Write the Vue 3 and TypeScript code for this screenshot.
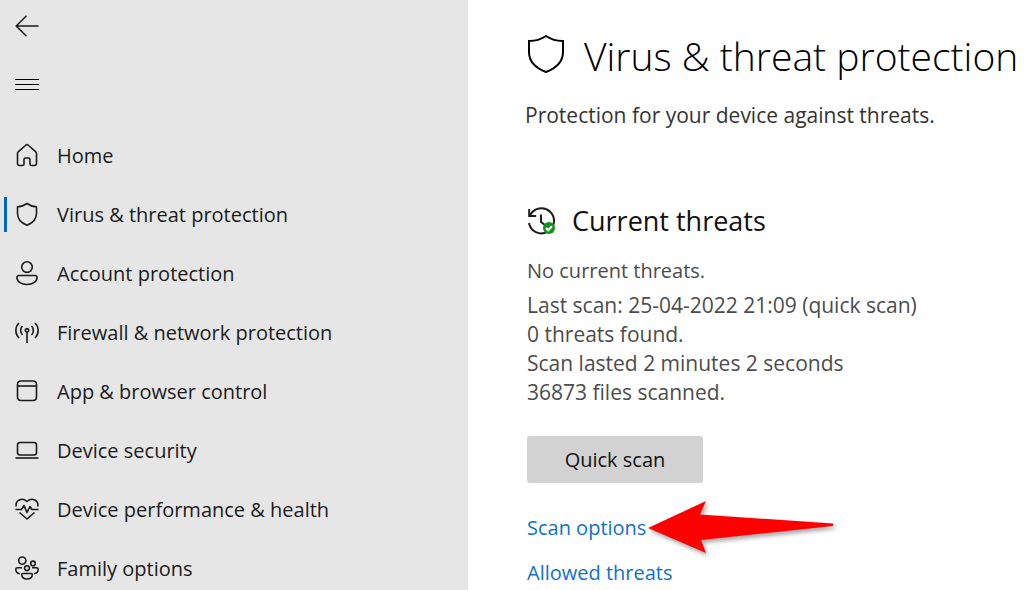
<script setup lang="ts">
interface NavItem {
  label: string
  icon: string[]
  active?: boolean
}

const navItems: NavItem[] = [
  {
    label: 'Home',
    icon: ['M2.5 10.5 Q2.5 9.4 3.4 8.6 L11 2 Q12 1.3 13 2 L20.6 8.6 Q21.5 9.4 21.5 10.5 V20.5 Q21.5 22.5 19.5 22.5 H16.5 Q15 22.5 15 21 V16.5 Q15 15 13.5 15 H10.5 Q9 15 9 16.5 V21 Q9 22.5 7.5 22.5 H4.5 Q2.5 22.5 2.5 20.5 Z'],
  },
  {
    label: 'Virus & threat protection',
    icon: ['M12 1.5 Q16.2 4.6 21.5 4.9 V11.5 Q21.5 19.5 12 23.2 Q2.5 19.5 2.5 11.5 V4.9 Q7.8 4.6 12 1.5 Z'],
    active: true,
  },
  {
    label: 'Account protection',
    icon: [
      'M12 .8 A5.3 5.3 0 1 1 12 11.4 A5.3 5.3 0 1 1 12 .8 Z',
      'M4 14.5 H20 Q22 14.5 22 16.5 C22 21 17.5 23.5 12 23.5 C6.5 23.5 2 21 2 16.5 Q2 14.5 4 14.5 Z',
    ],
  },
  {
    label: 'Firewall & network protection',
    icon: [
      'M4 3 C-.2 7 -.2 14 4 18',
      'M20 3 C24.2 7 24.2 14 20 18',
      'M7.5 6 C5 8.5 5 12.5 7.5 15',
      'M16.5 6 C19 8.5 19 12.5 16.5 15',
      'M12 8.6 A1.7 1.7 0 1 1 12 12 A1.7 1.7 0 1 1 12 8.6 Z',
      'M12 12 V23',
    ],
  },
  {
    label: 'App & browser control',
    icon: [
      'M6 2 H18 Q21.5 2 21.5 5.5 V18 Q21.5 21.5 18 21.5 H6 Q2.5 21.5 2.5 18 V5.5 Q2.5 2 6 2 Z',
      'M2.5 7 H21.5',
    ],
  },
  {
    label: 'Device security',
    icon: [
      'M5 4.5 H19 Q21.5 4.5 21.5 7 V14.5 Q21.5 17 19 17 H5 Q2.5 17 2.5 14.5 V7 Q2.5 4.5 5 4.5 Z',
      'M.5 20 H23.5',
    ],
  },
  {
    label: 'Device performance & health',
    icon: [
      'M1.2 9.5 C0 3.5 7 -.2 12 4.5 C17 -.2 24 3.5 22.8 9.5',
      'M.5 12.5 H6.5 L9 8.5 L12 15.5 L15 9.5 L17 12.5 H23.5',
      'M4.5 15.5 L12 22 L19.5 15.5',
    ],
  },
  {
    label: 'Family options',
    icon: [
      'M7.3 1 A3.6 3.6 0 1 1 7.3 8.2 A3.6 3.6 0 1 1 7.3 1 Z',
      'M18 5.1 A2.3 2.3 0 1 1 18 9.7 A2.3 2.3 0 1 1 18 5.1 Z',
      'M12 9.8 A2.4 2.4 0 1 1 12 14.6 A2.4 2.4 0 1 1 12 9.8 Z',
      'M7 11.8 H2.5 Q.8 11.8 .8 13.5 Q1 17.2 4.8 17.7',
      'M17 11.8 H21.5 Q23.2 11.8 23.2 13.5 Q23 17.2 19.2 17.7',
      'M7.5 17.5 H16.5 Q17.3 17.5 17.3 18.5 C17 24.5 7 24.5 6.7 18.5 Q6.7 17.5 7.5 17.5 Z',
    ],
  },
]

const scanDetails: string[] = [
  'Last scan: 25-04-2022 21:09 (quick scan)',
  '0 threats found.',
  'Scan lasted 2 minutes 2 seconds',
  '36873 files scanned.',
]
</script>

<template>
  <div class="window">
    <aside class="sidebar">
      <button class="icon-button" type="button" aria-label="Back">
        <svg class="icon" viewBox="0 0 24 24" aria-hidden="true">
          <path d="M23.5 12 H1.2 M11.5 1.8 L1.2 12 L11.5 22.2" />
        </svg>
      </button>
      <button class="icon-button" type="button" aria-label="Menu">
        <svg class="icon menu-icon" viewBox="0 0 24 24" aria-hidden="true">
          <path d="M0 7.5 H24 M0 12.5 H24 M0 17.5 H24" />
        </svg>
      </button>
      <nav class="nav">
        <a
          v-for="item in navItems"
          :key="item.label"
          href="#"
          class="nav-item"
          :class="{ active: item.active }"
          :aria-current="item.active ? 'page' : undefined"
        >
          <svg class="icon" viewBox="0 0 24 24" aria-hidden="true">
            <path v-for="d in item.icon" :key="d" :d="d" />
          </svg>
          <span>{{ item.label }}</span>
        </a>
      </nav>
    </aside>

    <main class="content">
      <header class="page-header">
        <svg class="title-icon" viewBox="0 0 38 40" aria-hidden="true">
          <path d="M19 2 Q27 7.2 36 7 V18 Q36 31.5 19 38 Q2 31.5 2 18 V7 Q11 7.2 19 2 Z" />
        </svg>
        <h1>Virus &amp; threat protection</h1>
      </header>
      <p class="intro">Protection for your device against threats.</p>

      <section class="threats">
        <div class="section-header">
          <svg class="history-icon" viewBox="0 0 30 30" aria-hidden="true">
            <path class="line" d="M2.2 3 V10 H9.2 M3 9.5 A12.6 12.6 0 1 1 2 17 M14 8.5 V16 L18 19" />
            <circle class="badge" cx="22" cy="22" r="6" />
            <path class="check" d="M19 22 L21.2 24.2 L25 20.2" />
          </svg>
          <h2>Current threats</h2>
        </div>
        <p class="status">No current threats.</p>
        <p v-for="line in scanDetails" :key="line" class="detail">{{ line }}</p>
        <button class="scan-button" type="button">Quick scan</button>
        <div class="links">
          <div class="link-row">
            <a href="#">Scan options</a>
            <svg class="pointer" viewBox="0 0 192 60" aria-hidden="true">
              <path d="M4 28 L62 1 L56 14.5 L189 23.5 V26 L57 40 L62 53 Z" />
            </svg>
          </div>
          <a href="#">Allowed threats</a>
        </div>
      </section>
    </main>
  </div>
</template>

<style>
body {
  margin: 0;
  background: #fff;
}
</style>

<style scoped>
.window {
  display: grid;
  grid-template-columns: 468fr 556fr;
  min-height: 100vh;
  font-family: "Open Sans", "Noto Sans", sans-serif;
  font-size: 20px;
  line-height: 30px;
  color: #1b1b1b;
}

h1,
h2,
p {
  margin: 0;
  white-space: nowrap;
}

a {
  text-decoration: none;
}

.sidebar {
  background: #e6e6e6;
  min-width: 0;
}

.icon-button {
  display: flex;
  align-items: center;
  height: 34px;
  margin-top: 9px;
  padding: 0 15px;
  border: 0;
  background: none;
  color: #1b1b1b;
}

.icon-button + .icon-button {
  margin-top: 24px;
}

.icon {
  flex: none;
  width: 24px;
  height: 24px;
  fill: none;
  stroke: currentColor;
  stroke-width: 1.6;
  stroke-linejoin: round;
  overflow: visible;
}

.menu-icon {
  stroke: #000;
  stroke-width: 1;
}

.nav {
  display: flex;
  flex-direction: column;
  gap: 24px;
  margin-top: 37px;
}

.nav-item {
  display: flex;
  align-items: center;
  gap: 18px;
  height: 35px;
  margin-left: 4px;
  padding-left: 8px;
  border-left: 3px solid transparent;
  color: #1b1b1b;
  white-space: nowrap;
}

.nav-item .icon {
  margin-bottom: 2px;
}

.active {
  border-image: linear-gradient(#0067c0, #0067c0) 1;
}

.content {
  min-width: 0;
  padding: 28px 6px 0 59px;
}

.page-header {
  display: flex;
  align-items: center;
  gap: 19px;
}

.title-icon {
  flex: none;
  width: 38px;
  height: 40px;
  margin-bottom: 4px;
  fill: none;
  stroke: #000;
  stroke-width: 2;
}

h1 {
  font-size: 39px;
  font-weight: 300;
  line-height: 56px;
  color: #000;
}

.intro {
  margin: 16px 0 0 -2px;
  font-size: 21px;
  color: #333;
}

.threats {
  margin-top: 71px;
  color: #4c4c4c;
}

.section-header {
  display: flex;
  align-items: center;
  gap: 15px;
}

.history-icon {
  flex: none;
  width: 30px;
  height: 30px;
  fill: none;
}

.line {
  stroke: #1b1b1b;
  stroke-width: 2;
}

.badge {
  fill: #13911c;
}

.check {
  stroke: #fff;
  stroke-width: 2;
}

h2 {
  font-size: 27px;
  font-weight: 400;
  line-height: 40px;
  color: #111;
}

.status {
  margin: 15px 0 5px;
}

.detail {
  font-size: 21px;
  line-height: 29px;
}

.scan-button {
  display: block;
  min-width: 176px;
  height: 47px;
  margin-top: 29px;
  border: 0;
  border-radius: 3px;
  background: #d2d2d2;
  color: #111;
  font: inherit;
}

.links {
  display: flex;
  flex-direction: column;
  align-items: flex-start;
  gap: 15px;
  margin-top: 30px;
}

.links a {
  color: #0f71c7;
}

.link-row {
  position: relative;
}

.pointer {
  position: absolute;
  left: 117px;
  top: -13px;
  width: 192px;
  height: 60px;
  fill: #fe0000;
  overflow: visible;
  filter: drop-shadow(2px 3px 2px rgba(0, 0, 0, 0.35));
}
</style>
